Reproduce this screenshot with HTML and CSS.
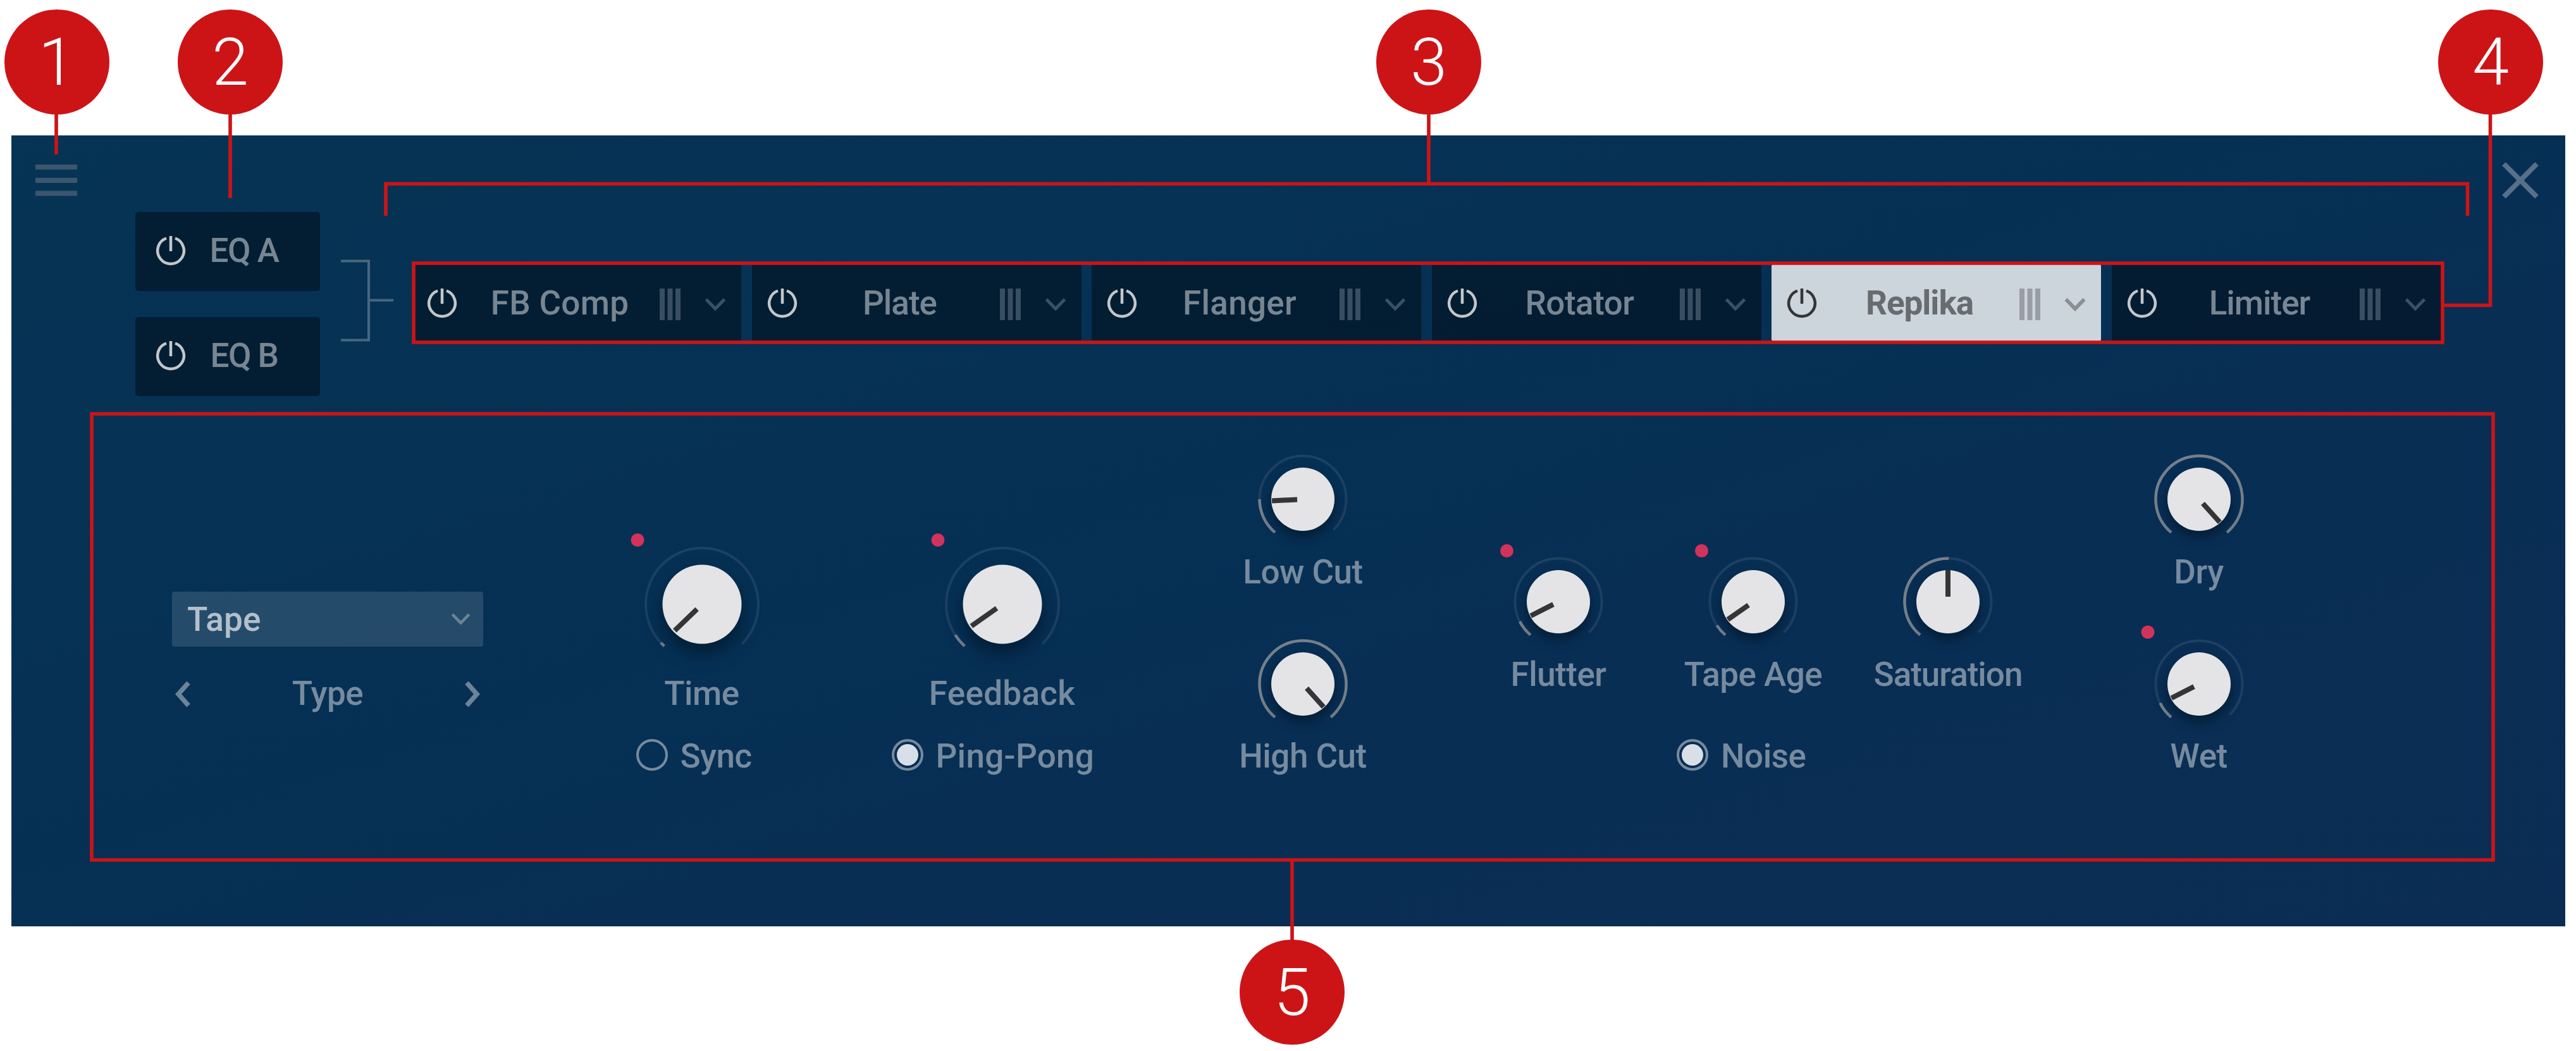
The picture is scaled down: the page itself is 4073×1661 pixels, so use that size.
FILE: index.html
```html
<!DOCTYPE html>
<html lang="en">
<head>
<meta charset="utf-8">
<title>Effects panel</title>
<link rel="stylesheet" href="styles.css">
</head>
<body>
<svg class="defs" width="0" height="0">
  <symbol id="power" viewBox="0 0 48 48"><path d="M17 4.500A20.800 20.800 0 1 0 31 4.500" /><path d="M24 1V25" /></symbol>
  <symbol id="grip" viewBox="0 0 33 50"><path d="M4 0V50M16.500 0V50M29 0V50" /></symbol>
  <symbol id="down" viewBox="0 0 34 24"><path d="M2.500 3L17 18L31.500 3" /></symbol>
</svg>

<main class="panel">
  <header class="topbar">
    <svg class="menu" viewBox="0 0 66 50"><path d="M0 4H66M0 25H66M0 45.500H66" /></svg>
    <svg class="close" viewBox="0 0 58 58"><path d="M3 3L55 55M55 3L3 55" /></svg>
  </header>

  <section class="chain">
    <div class="eqs">
      <div class="eq"><svg class="power"><use href="#power" /></svg><span class="eq-name">EQ A</span></div>
      <div class="eq"><svg class="power"><use href="#power" /></svg><span class="eq-name">EQ B</span></div>
    </div>
    <svg class="merge" viewBox="0 0 83 130"><path d="M0 2.500H44V127.500H0M44 64.500H83" /></svg>
    <div class="slots">
      <div class="slot"><svg class="power"><use href="#power" /></svg><span class="slot-name wide">FB Comp</span><svg class="grip"><use href="#grip" /></svg><svg class="down"><use href="#down" /></svg></div>
      <div class="slot"><svg class="power"><use href="#power" /></svg><span class="slot-name tight">Plate</span><svg class="grip"><use href="#grip" /></svg><svg class="down"><use href="#down" /></svg></div>
      <div class="slot"><svg class="power"><use href="#power" /></svg><span class="slot-name wide">Flanger</span><svg class="grip"><use href="#grip" /></svg><svg class="down"><use href="#down" /></svg></div>
      <div class="slot"><svg class="power"><use href="#power" /></svg><span class="slot-name">Rotator</span><svg class="grip"><use href="#grip" /></svg><svg class="down"><use href="#down" /></svg></div>
      <div class="slot active"><svg class="power"><use href="#power" /></svg><span class="slot-name">Replika</span><svg class="grip"><use href="#grip" /></svg><svg class="down"><use href="#down" /></svg></div>
      <div class="slot"><svg class="power"><use href="#power" /></svg><span class="slot-name tight">Limiter</span><svg class="grip"><use href="#grip" /></svg><svg class="down"><use href="#down" /></svg></div>
    </div>
  </section>

  <section class="controls">
    <div class="type">
      <div class="select"><span class="wide">Tape</span><svg class="down"><use href="#down" /></svg></div>
      <div class="stepper">
        <svg class="arrow" viewBox="0 0 25 42"><path d="M22 3L6 21L22 39" /></svg>
        <span class="label">Type</span>
        <svg class="arrow" viewBox="0 0 25 42"><path d="M3 3L19 21L3 39" /></svg>
      </div>
    </div>

    <div class="column time">
      <svg class="knob large" viewBox="-100 -100 200 200">
        <circle class="dot" cx="-102" cy="-101.500" r="10.500" />
        <circle class="track" r="89" pathLength="360" stroke-dasharray="270 90" transform="rotate(135)" />
        <circle class="value" r="89" pathLength="360" stroke-dasharray="5 355" transform="rotate(132)" />
        <circle class="cap" r="62.500" />
        <path class="pointer" d="M11 0H60" transform="rotate(136)" />
      </svg>
      <span class="label">Time</span>
      <div class="toggle"><svg class="radio" viewBox="0 0 50 50"><circle class="radio-ring" cx="25" cy="25" r="23" /></svg><span>Sync</span></div>
    </div>

    <div class="column feedback">
      <svg class="knob large" viewBox="-100 -100 200 200">
        <circle class="dot" cx="-102" cy="-101.500" r="10.500" />
        <circle class="track" r="89" pathLength="360" stroke-dasharray="270 90" transform="rotate(135)" />
        <circle class="value" r="89" pathLength="360" stroke-dasharray="15 345" transform="rotate(132)" />
        <circle class="cap" r="62.500" />
        <path class="pointer" d="M11 0H60" transform="rotate(145)" />
      </svg>
      <span class="label wide">Feedback</span>
      <div class="toggle"><svg class="radio" viewBox="0 0 50 50"><circle class="radio-ring" cx="25" cy="25" r="23" /><circle class="radio-on" cx="25" cy="25" r="17" /></svg><span class="wide">Ping-Pong</span></div>
    </div>

    <div class="column cuts">
      <svg class="knob" viewBox="-80 -80 160 160">
        <circle class="track" r="68.500" pathLength="360" stroke-dasharray="270 90" transform="rotate(135)" />
        <circle class="value" r="68.500" pathLength="360" stroke-dasharray="50 310" transform="rotate(130)" />
        <circle class="cap" r="50" />
        <path class="pointer" d="M9 0H49" transform="rotate(177)" />
      </svg>
      <span class="label">Low Cut</span>
      <svg class="knob second" viewBox="-80 -80 160 160">
        <circle class="value" r="68.500" pathLength="360" stroke-dasharray="280 80" transform="rotate(130)" />
        <circle class="cap" r="50" />
        <path class="pointer" d="M9 0H49" transform="rotate(48)" />
      </svg>
      <span class="label">High Cut</span>
    </div>

    <div class="tape">
      <div class="tape-knobs">
        <div class="column">
          <svg class="knob" viewBox="-80 -80 160 160">
            <circle class="dot" cx="-81.500" cy="-80.500" r="10.500" />
            <circle class="track" r="68.500" pathLength="360" stroke-dasharray="270 90" transform="rotate(135)" />
            <circle class="value" r="68.500" pathLength="360" stroke-dasharray="23 337" transform="rotate(130)" />
            <circle class="cap" r="50" />
            <path class="pointer" d="M9 0H49" transform="rotate(153)" />
          </svg>
          <span class="label">Flutter</span>
        </div>
        <div class="column">
          <svg class="knob" viewBox="-80 -80 160 160">
            <circle class="dot" cx="-81.500" cy="-80.500" r="10.500" />
            <circle class="track" r="68.500" pathLength="360" stroke-dasharray="270 90" transform="rotate(135)" />
            <circle class="value" r="68.500" pathLength="360" stroke-dasharray="17 343" transform="rotate(130)" />
            <circle class="cap" r="50" />
            <path class="pointer" d="M9 0H49" transform="rotate(145)" />
          </svg>
          <span class="label">Tape Age</span>
        </div>
        <div class="column">
          <svg class="knob" viewBox="-80 -80 160 160">
            <circle class="track" r="68.500" pathLength="360" stroke-dasharray="270 90" transform="rotate(135)" />
            <circle class="value" r="68.500" pathLength="360" stroke-dasharray="141 219" transform="rotate(130)" />
            <circle class="cap" r="50" />
            <path class="pointer" d="M8 0H50" transform="rotate(-90)" />
          </svg>
          <span class="label tight">Saturation</span>
        </div>
      </div>
      <div class="toggle"><svg class="radio" viewBox="0 0 50 50"><circle class="radio-ring" cx="25" cy="25" r="23" /><circle class="radio-on" cx="25" cy="25" r="17" /></svg><span>Noise</span></div>
    </div>

    <div class="column mix">
      <svg class="knob" viewBox="-80 -80 160 160">
        <circle class="value" r="68.500" pathLength="360" stroke-dasharray="280 80" transform="rotate(130)" />
        <circle class="cap" r="50" />
        <path class="pointer" d="M9 0H49" transform="rotate(48)" />
      </svg>
      <span class="label">Dry</span>
      <svg class="knob second" viewBox="-80 -80 160 160">
        <circle class="dot" cx="-81" cy="-82" r="10.500" />
        <circle class="track" r="68.500" pathLength="360" stroke-dasharray="270 90" transform="rotate(135)" />
        <circle class="value" r="68.500" pathLength="360" stroke-dasharray="24 336" transform="rotate(130)" />
        <circle class="cap" r="50" />
        <path class="pointer" d="M9 0H49" transform="rotate(153)" />
      </svg>
      <span class="label">Wet</span>
    </div>
  </section>
</main>

<svg class="callouts" viewBox="0 0 4073 1661">
  <path d="M89 170V244M364 170V313" />
  <path d="M2259 170V290.500M610 341V290.500H3901.500V341" />
  <path d="M3937.500 170V482.500H3862M654 416H3862V541H654Z" />
  <path d="M145 654H3942V1359H145ZM2043 1359V1500" />
</svg>
<span class="badge badge-1">1</span>
<span class="badge badge-2">2</span>
<span class="badge badge-3">3</span>
<span class="badge badge-4">4</span>
<span class="badge badge-5">5</span>
</body>
</html>
```
FILE: styles.css
```css
* { box-sizing: border-box; }

body {
  position: relative;
  width: 4073px;
  height: 1661px;
  margin: 0;
  padding-top: 214px;
  overflow: hidden;
  background: #fff;
  color: #768b9f;
  font: 500 53px/60px Roboto, "Liberation Sans", sans-serif;
  letter-spacing: -.5px;
}

svg { display: block; flex: none; fill: none; overflow: visible; }
.defs { position: absolute; }

.wide { letter-spacing: .3px; }
.tight { letter-spacing: -1px; }

.panel {
  width: 4038px;
  height: 1250px;
  margin-left: 18px;
  background: linear-gradient(162deg, #063454 0%, #053054 45%, #082e54 60%, #0b2d54 100%);
}

/* Top bar */
.topbar {
  display: flex;
  justify-content: space-between;
  height: 121px;
  padding: 42px 42px 0 38px;
}
.menu { width: 66px; height: 50px; margin-top: 4px; stroke: #3b566d; stroke-width: 8; }
.close { width: 58px; height: 58px; stroke: #577089; stroke-width: 8; }

/* Effect chain */
.chain { display: flex; align-items: flex-start; height: 316px; padding-left: 196px; }
.eqs { display: flex; flex-direction: column; gap: 41px; }
.eq {
  display: flex;
  align-items: center;
  width: 292px;
  height: 125px;
  padding: 0 0 4px 32px;
  border-radius: 5px;
  background: rgba(0, 0, 0, .4);
  color: #778692;
}
.eq-name { width: 184px; text-align: center; letter-spacing: -1.500px; }
.power { width: 48px; height: 48px; stroke: #c3c7ca; stroke-width: 4.500; }
.merge { width: 83px; height: 130px; margin: 75px 29px 0 33px; stroke: #48677f; stroke-width: 4; }
.slots { display: flex; gap: 16.500px; margin-top: 81px; }
.slot {
  display: flex;
  align-items: center;
  width: 521px;
  height: 125px;
  padding-left: 24px;
  border-radius: 5px;
  background: rgba(0, 0, 0, .4);
  color: #778692;
}
.slot-name { width: 320px; padding-left: 4px; text-align: center; }
.grip { width: 33px; height: 50px; margin-top: 4px; stroke: #394f61; stroke-width: 8; }
.down { width: 34px; height: 24px; margin: 7px 0 0 38px; stroke: #3b5163; stroke-width: 5; }
.slot.active { background: #ccd4dc; color: #686b70; }
.active .slot-name { font-weight: 700; letter-spacing: -1px; }
.active .power { stroke: #333536; }
.active .grip { stroke: #989da6; }
.active .down { stroke: #8a8f94; stroke-width: 6; }

/* Parameters */
.controls { display: flex; align-items: flex-start; padding-left: 254px; }
.column { display: flex; flex-direction: column; align-items: center; }
.label { white-space: nowrap; }

.type { width: 492px; padding-top: 284px; }
.select {
  display: flex;
  align-items: center;
  justify-content: space-between;
  height: 87px;
  padding: 0 20px 0 24px;
  border-radius: 4px;
  background: rgba(255, 255, 255, .13);
  color: #b3c0cc;
}
.select .down { width: 31px; height: 22px; margin: 0; stroke: #6b8397; }
.stepper { display: flex; align-items: center; justify-content: space-between; margin-top: 44px; padding: 0 4px; }
.arrow { width: 25px; height: 42px; margin-top: 1px; stroke: #6c8398; stroke-width: 7.500; }

.time { width: 300px; margin-left: 195.500px; padding-top: 204px; }
.feedback { width: 360px; margin-left: 145px; padding-top: 204px; }
.cuts { width: 240px; margin-left: 175.500px; padding-top: 58px; }
.tape { width: 924px; margin-left: 130px; padding-top: 220px; }
.tape-knobs { display: grid; grid-template-columns: repeat(3, 308px); }
.mix { width: 200px; margin-left: 142.500px; padding-top: 58px; }

.knob { width: 160px; height: 160px; margin-bottom: 5px; }
.knob.large { width: 200px; height: 200px; margin-bottom: 11px; }
.knob.second { margin-top: 66.500px; margin-bottom: 4px; }
.track { stroke: #1d4161; stroke-width: 4; }
.value { stroke: #75808b; stroke-width: 4.500; }
.cap { fill: #e4e4e6; filter: drop-shadow(0 10px 9px rgba(0, 18, 35, .6)); }
.large .cap { filter: drop-shadow(0 15px 14px rgba(0, 18, 35, .65)); }
.pointer { stroke: #353535; stroke-width: 8; }
.dot { fill: #d2335c; }

.toggle { display: flex; align-items: center; gap: 20px; height: 60px; margin-top: 37px; align-self: flex-start; }
.toggle span { margin-top: 4px; white-space: nowrap; }
.time .toggle { padding-left: 46px; }
.feedback .toggle { padding-left: 5px; }
.tape .toggle { margin-top: 67px; padding-left: 341px; }
.radio { width: 50px; height: 50px; }
.radio-ring { stroke: #768b9f; stroke-width: 4; }
.radio-on { fill: #d9dfe6; }

/* Numbered callouts over the panel */
.callouts { position: absolute; top: 0; left: 0; width: 4073px; height: 1661px; stroke: #cc1417; stroke-width: 5.600; }
.badge {
  position: absolute;
  top: 15px;
  width: 166px;
  height: 166px;
  border-radius: 50%;
  background: #cc1417;
  color: #fff;
  font-size: 104px;
  font-weight: 300;
  line-height: 168px;
  letter-spacing: 0;
  text-align: center;
}
.badge-1 { left: 6.500px; }
.badge-2 { left: 281px; }
.badge-3 { left: 2176px; }
.badge-4 { left: 3855px; }
.badge-5 { top: 1485px; left: 1960px; }
```
